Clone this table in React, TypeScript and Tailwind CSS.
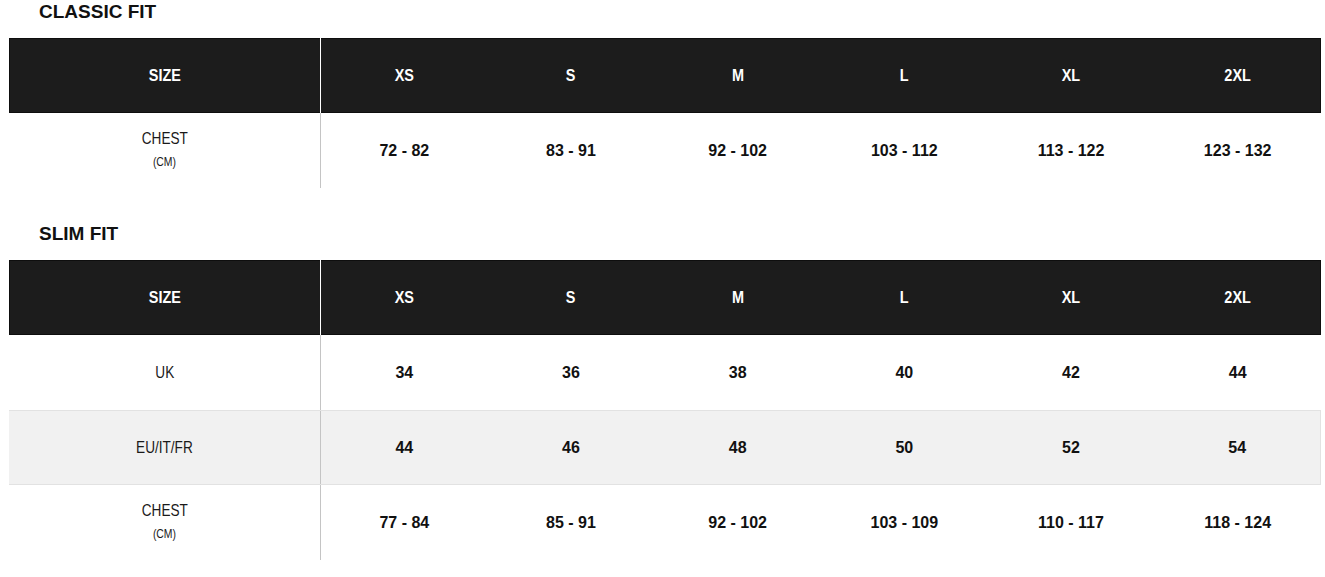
const sizes = ["XS", "S", "M", "L", "XL", "2XL"];

const classicRows = [
  { label: "CHEST", unit: "(CM)", values: ["72 - 82", "83 - 91", "92 - 102", "103 - 112", "113 - 122", "123 - 132"] },
];

const slimRows = [
  { label: "UK", values: ["34", "36", "38", "40", "42", "44"] },
  { label: "EU/IT/FR", values: ["44", "46", "48", "50", "52", "54"], shaded: true },
  { label: "CHEST", unit: "(CM)", values: ["77 - 84", "85 - 91", "92 - 102", "103 - 109", "110 - 117", "118 - 124"] },
];

type Row = { label: string; unit?: string; values: string[]; shaded?: boolean };

const arial = "font-['Liberation_Sans',Arial,sans-serif]";

function SizeTable({ rows }: { rows: Row[] }) {
  return (
    <div className="w-[1312px]">
      <div className="grid h-[75px] grid-cols-[312px_repeat(6,1fr)] bg-[#1c1c1c] shadow-[inset_0_0_0_1px_#0e0e0e]">
        <div className="flex items-center justify-center border-r border-white">
          <span className={`inline-block scale-x-[0.85] text-[17px] font-bold text-white ${arial}`}>SIZE</span>
        </div>
        {sizes.map((s) => (
          <div key={s} className="flex items-center justify-center">
            <span className={`inline-block scale-x-[0.85] text-[17px] font-bold text-white ${arial}`}>{s}</span>
          </div>
        ))}
      </div>
      {rows.map((row) => (
        <div
          key={row.label}
          className={
            "grid h-[75px] grid-cols-[312px_repeat(6,1fr)] " +
            (row.shaded ? "border-y border-[#e2e2e2] bg-[#f1f1f1]" : "")
          }
        >
          <div className={`flex flex-col items-center justify-center border-r border-[#c4c4c4] text-[#1a1a1a] ${arial}`}>
            <span className="inline-block scale-x-[0.8] text-[17px] leading-[22px]">{row.label}</span>
            {row.unit ? <span className="inline-block scale-x-[0.8] text-[13px] leading-[24px]">{row.unit}</span> : null}
          </div>
          {row.values.map((v, i) => (
            <div
              key={i}
              className={
                `flex items-center justify-center text-[16px] font-bold text-[#111] ${arial} ` +
                (row.shaded && i === 5 ? "border-r border-[#e2e2e2]" : "")
              }
            >
              {v}
            </div>
          ))}
        </div>
      ))}
    </div>
  );
}

export default function App() {
  return (
    <div className="h-[577px] w-[1325px] overflow-hidden bg-white pl-[9px]">
      <div className={`h-[38px] pl-[30px] text-[19px] font-bold leading-[24px] text-[#111] ${arial}`}>
        CLASSIC FIT
      </div>
      <SizeTable rows={classicRows} />
      <div className={`h-[72px] pl-[30px] pt-[34px] text-[19px] font-bold leading-[24px] text-[#111] ${arial}`}>
        SLIM FIT
      </div>
      <SizeTable rows={slimRows} />
    </div>
  );
}
